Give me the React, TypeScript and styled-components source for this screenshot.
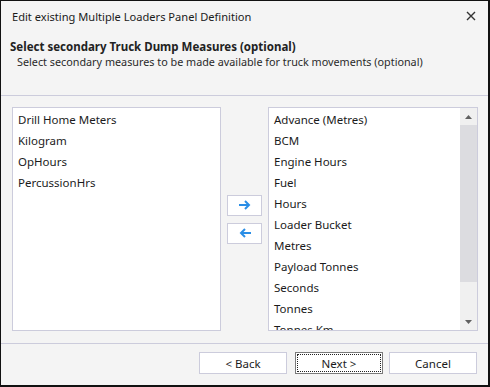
import React from "react";
import styled, { createGlobalStyle } from "styled-components";

const Global = createGlobalStyle`
  html, body { margin: 0; padding: 0; background: #f4f4f4; }
  * { box-sizing: border-box; }
`;

const font = `"Noto Sans", "Open Sans", "DejaVu Sans", sans-serif`;

const Window = styled.div`
  width: 490px;
  height: 387px;
  background: #f4f4f4;
  border-style: solid;
  border-color: #111;
  border-width: 1px 2px 2px 1px;
  display: flex;
  flex-direction: column;
  font-family: ${font};
  color: #1b1b1b;
`;

const TitleBar = styled.div`
  height: 31px;
  display: flex;
  align-items: center;
  justify-content: space-between;
  padding: 0 12px 0 11px;
  font-size: 11.1px;
`;

const Close = styled.svg`
  width: 10px;
  height: 10px;
`;

const Header = styled.div`
  height: 65px;
  border-bottom: 1px solid #ccccdc;
  padding: 7px 0 0 9px;
`;

const Heading = styled.div`
  font-size: 11.5px;
  font-weight: 700;
  line-height: 15px;
  color: #222;
`;

const Sub = styled.div`
  font-size: 10.8px;
  line-height: 15px;
  padding-left: 7px;
  color: #2a2a2a;
`;

const Content = styled.div`
  flex: 1;
  display: flex;
  align-items: center;
  gap: 6px;
  padding: 11px 10px 12px 11px;
`;

const ListBox = styled.div<{ $w: number }>`
  width: ${(p) => p.$w}px;
  height: 224px;
  background: #fff;
  border: 1px solid #ccccdc;
  display: flex;
  overflow: hidden;
`;

const Items = styled.div`
  flex: 1;
  padding: 1px 0 0 5px;
  overflow: hidden;
`;

const Item = styled.div`
  height: 21px;
  line-height: 21px;
  font-size: 11.5px;
  white-space: nowrap;
  color: #1b1b1b;
`;

const Scroll = styled.div`
  width: 17px;
  background: #f0f0f0;
  display: flex;
  flex-direction: column;
`;

const ScrollArrow = styled.div`
  height: 17px;
  display: flex;
  align-items: center;
  justify-content: center;
`;

const Thumb = styled.div`
  height: 157px;
  background: #dcdce0;
`;

const Track = styled.div`
  flex: 1;
`;

const Middle = styled.div`
  display: flex;
  flex-direction: column;
  gap: 7px;
`;

const ArrowButton = styled.button`
  width: 35px;
  height: 21px;
  background: #fff;
  border: 1px solid #ccccdc;
  padding: 0;
  display: flex;
  align-items: center;
  justify-content: center;
`;

const Footer = styled.div`
  height: 42px;
  border-top: 1px solid #ccccdc;
  display: flex;
  justify-content: flex-end;
  align-items: flex-start;
  padding: 8px 11px 0 0;
`;

const Btn = styled.button<{ $focus?: boolean; $ml: number }>`
  width: 88px;
  height: 22px;
  margin-left: ${(p) => p.$ml}px;
  background: #fff;
  border: 1px solid ${(p) => (p.$focus ? "#7a7a7a" : "#ccccdc")};
  font-family: ${font};
  font-size: 11.5px;
  color: #1b1b1b;
  padding: 1px;
`;

const FocusRing = styled.span`
  display: flex;
  align-items: center;
  justify-content: center;
  width: 100%;
  height: 100%;
  border: 1px dotted #222;
`;

const Plain = styled.span`
  display: flex;
  align-items: center;
  justify-content: center;
  width: 100%;
  height: 100%;
`;

const Arrow = ({ dir }: { dir: "r" | "l" }) => (
  <svg width="12" height="10" viewBox="0 0 12 10">
    {dir === "r" ? (
      <path d="M0 5h9M6 1l4 4-4 4" stroke="#2a8ee6" strokeWidth="2" fill="none" />
    ) : (
      <path d="M12 5H3M6 1L2 5l4 4" stroke="#2a8ee6" strokeWidth="2" fill="none" />
    )}
  </svg>
);

const left = ["Drill Home Meters", "Kilogram", "OpHours", "PercussionHrs"];
const right = [
  "Advance (Metres)",
  "BCM",
  "Engine Hours",
  "Fuel",
  "Hours",
  "Loader Bucket",
  "Metres",
  "Payload Tonnes",
  "Seconds",
  "Tonnes",
  "Tonnes Km",
];

export default function App() {
  return (
    <>
      <Global />
      <Window>
        <TitleBar>
          <span>Edit existing Multiple Loaders Panel Definition</span>
          <Close viewBox="0 0 10 10">
            <path d="M1 1l8 8M9 1l-8 8" stroke="#333" strokeWidth="1.4" />
          </Close>
        </TitleBar>
        <Header>
          <Heading>Select secondary Truck Dump Measures (optional)</Heading>
          <Sub>Select secondary measures to be made available for truck movements (optional)</Sub>
        </Header>
        <Content>
          <ListBox $w={209}>
            <Items>
              {left.map((t) => (
                <Item key={t}>{t}</Item>
              ))}
            </Items>
          </ListBox>
          <Middle>
            <ArrowButton>
              <Arrow dir="r" />
            </ArrowButton>
            <ArrowButton>
              <Arrow dir="l" />
            </ArrowButton>
          </Middle>
          <ListBox $w={210}>
            <Items>
              {right.map((t) => (
                <Item key={t}>{t}</Item>
              ))}
            </Items>
            <Scroll>
              <ScrollArrow>
                <svg width="7" height="4" viewBox="0 0 7 4">
                  <path d="M0 4L3.5 0 7 4z" fill="#606060" />
                </svg>
              </ScrollArrow>
              <Thumb />
              <Track />
              <ScrollArrow>
                <svg width="7" height="4" viewBox="0 0 7 4">
                  <path d="M0 0h7L3.5 4z" fill="#606060" />
                </svg>
              </ScrollArrow>
            </Scroll>
          </ListBox>
        </Content>
        <Footer>
          <Btn $ml={0}>
            <Plain>&lt; Back</Plain>
          </Btn>
          <Btn $ml={8} $focus>
            <FocusRing>Next &gt;</FocusRing>
          </Btn>
          <Btn $ml={6}>
            <Plain>Cancel</Plain>
          </Btn>
        </Footer>
      </Window>
    </>
  );
}
